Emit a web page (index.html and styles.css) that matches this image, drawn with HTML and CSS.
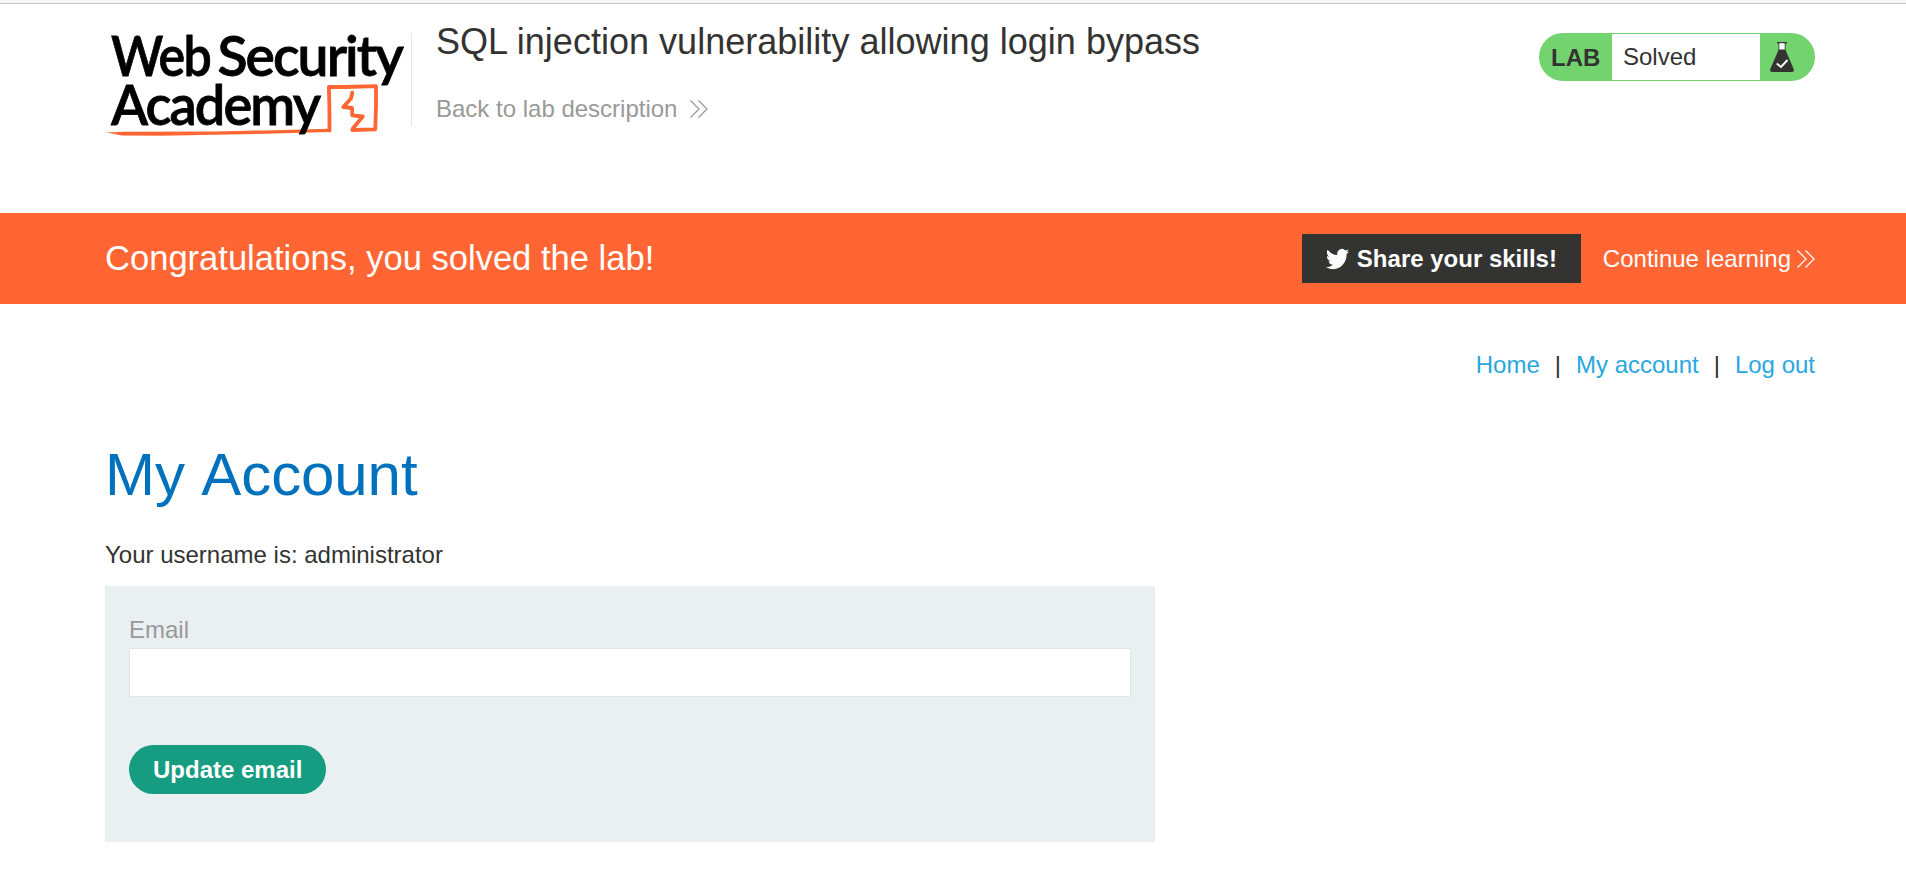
FILE: index.html
```html
<!DOCTYPE html>
<html lang="en">
<head>
<meta charset="utf-8">
<title>SQL injection vulnerability allowing login bypass</title>
<link rel="stylesheet" href="styles.css">
</head>
<body>
<header class="lab-header">
  <svg class="logo" width="306" height="130" viewBox="105 14 306 130" role="img" aria-label="Web Security Academy">
    <g class="logo-text">
      <text x="111" y="76.300" textLength="99" lengthAdjust="spacingAndGlyphs">Web</text>
      <text x="217.500" y="76.300" textLength="184.500" lengthAdjust="spacingAndGlyphs">Security</text>
    </g>
    <path fill="#f63" d="M106 132.600L125 131.700L215 131.400L265 130.400L300 129.600L330 128.800L331 132.100L310 132.600L265 133.800L215 134.800L160 135.800L122 135.600Z"/>
    <path class="logo-box" d="M329.500 130.500L329.400 108L328.900 87L345 87L376 86.200L376 106L375.300 129.300L352.300 130L352.800 128.500L362.800 116.500L352.300 115.300L352 108L343.300 107L351 98.500L352.300 92.500"/>
    <g class="logo-text">
      <text x="111" y="125" textLength="208" lengthAdjust="spacingAndGlyphs">Academy</text>
    </g>
  </svg>
  <div class="lab-title">
    <h2>SQL injection vulnerability allowing login bypass</h2>
    <a class="back" href="#">Back to lab description
      <svg class="arrows" width="18" height="18" viewBox="0 0 18 18"><path d="M.500 .500L9 9L.500 17.500M8.500 .500L17 9L8.500 17.500"/></svg>
    </a>
  </div>
  <div class="lab-status">
    <span class="lab-tag">LAB</span>
    <span class="lab-state">Solved</span>
    <span class="lab-flask">
      <svg width="24" height="30" viewBox="0 0 24 30">
        <path fill="#333332" d="M7 0H17V1.500H15.500V8L23.700 27Q24.600 30 22 30H2Q-.600 30 .300 27L8.500 8V1.500H7Z"/>
        <path fill="#fff" d="M9.300 1.200H14.700V7.500H9.300Z"/>
        <path fill="none" stroke="#fff" stroke-width="1.900" d="M6.800 21.500L11 25L17.500 18"/>
      </svg>
    </span>
  </div>
</header>
<section class="banner">
  <h4>Congratulations, you solved the lab!</h4>
  <div class="banner-actions">
    <a class="share" href="#">
      <svg width="23" height="22" viewBox="0 1.500 24 21" preserveAspectRatio="none"><path fill="#fff" d="M23.950 4.570a10 10 0 0 1-2.820.770 4.960 4.960 0 0 0 2.160-2.720c-.950.550-2 .950-3.130 1.180a4.920 4.920 0 0 0-8.380 4.480C7.690 8.100 4.070 6.130 1.640 3.160a4.820 4.820 0 0 0-.670 2.480c0 1.710.870 3.210 2.190 4.100a4.900 4.900 0 0 1-2.230-.620v.060a4.920 4.920 0 0 0 3.950 4.830 5 5 0 0 1-2.210.080 4.940 4.940 0 0 0 4.600 3.420A9.870 9.870 0 0 1 0 19.540a13.990 13.990 0 0 0 7.550 2.210c9.050 0 14-7.500 14-13.980 0-.210 0-.420-.020-.630A9.940 9.940 0 0 0 24 4.590z"/></svg>
      <span>Share your skills!</span>
    </a>
    <a class="continue" href="#">
      <span>Continue learning</span>
      <svg class="arrows" width="18" height="18" viewBox="0 0 18 18"><path d="M.500 .500L9 9L.500 17.500M8.500 .500L17 9L8.500 17.500"/></svg>
    </a>
  </div>
</section>
<main class="page">
  <nav class="nav">
    <a href="#">Home</a><span>|</span><a href="#">My account</a><span>|</span><a href="#">Log out</a>
  </nav>
  <h1>My Account</h1>
  <p>Your username is: administrator</p>
  <form class="email-form">
    <label for="email">Email</label>
    <input id="email" type="email">
    <button type="button">Update email</button>
  </form>
</main>
</body>
</html>
```
FILE: styles.css
```css
* { box-sizing: border-box; }

body {
  margin: 0;
  border-top: 3px solid #f6f6fa;
  background: #fff;
  color: #333332;
  font: 24px/28px "Liberation Sans", Arial, sans-serif;
}

h1, h2, h4, p { margin: 0; font-weight: 400; }
a { text-decoration: none; }
svg { display: block; flex: none; }

.lab-header {
  display: flex;
  align-items: flex-start;
  height: 210px;
  padding: 0 91px 0 105px;
  border-top: 1px solid #c8c8cc;
}

.logo { margin-top: 10px; overflow: visible; }
.logo-text {
  font: 600 56.5px Lato, sans-serif;
  letter-spacing: -2px;
  fill: #000;
  stroke: #000;
  stroke-width: .8;
}
.logo-box { fill: none; stroke: #f63; stroke-width: 3.8; stroke-linejoin: round; stroke-linecap: round; }

.lab-title {
  flex: 1;
  height: 93px;
  margin-top: 29px;
  padding-left: 24px;
  border-left: 1px solid #e6e6e6;
}
.lab-title h2 {
  margin-top: -12px;
  font-size: 36px;
  line-height: 42px;
  letter-spacing: .02px;
}

.back {
  display: flex;
  align-items: center;
  gap: 13px;
  margin-top: 32px;
  color: #999;
}

.arrows { fill: none; stroke: currentColor; stroke-width: 1.25; }

.lab-status {
  display: flex;
  width: 276px;
  height: 48px;
  margin-top: 29px;
  padding: 1px 0;
  border-radius: 24px;
  background: #72d36f;
  line-height: 46px;
}
.lab-tag { width: 73px; padding-left: 12px; font-weight: 700; line-height: 48px; }
.lab-state { width: 148px; padding-left: 11px; background: #fff; }
.lab-flask { padding: 8px 0 0 10px; }

.banner {
  display: flex;
  align-items: center;
  justify-content: space-between;
  height: 91px;
  padding: 0 91px 0 105px;
  background: #f63;
  color: #fff;
}
.banner h4 { padding-bottom: 2px; font-size: 34.56px; line-height: 40px; }
.banner-actions { display: flex; align-items: center; gap: 22px; }
.banner a { display: flex; align-items: center; color: #fff; }
.share {
  gap: 8px;
  width: 279px;
  height: 49px;
  padding-left: 24px;
  background: #333332;
  font-weight: 700;
}
.continue { gap: 6px; }

.page { padding: 47px 91px 0 105px; }
.nav { display: flex; justify-content: flex-end; gap: 15px; }
.nav a { color: #29a7df; }

h1 {
  margin-top: 61px;
  color: #0071bc;
  font-size: 60px;
  line-height: 70px;
  letter-spacing: -.1px;
  font-kerning: none;
}
.page p { margin-top: 31px; }

.email-form {
  display: flex;
  flex-direction: column;
  align-items: flex-start;
  width: 1050px;
  height: 256px;
  margin-top: 17px;
  padding: 30px 24px 48px;
  background: #eaeff2;
}
.email-form label { color: #999; }
.email-form input {
  width: 100%;
  height: 49px;
  margin: 4px 0 48px;
  padding: 0 12px;
  border: 1px solid #e4e4e4;
  background: #fff;
  font: inherit;
}
.email-form button {
  height: 49px;
  padding: 0 24px;
  border: 0;
  border-radius: 25px;
  background: #169c80;
  color: #fff;
  font: inherit;
  font-weight: 700;
}
```
